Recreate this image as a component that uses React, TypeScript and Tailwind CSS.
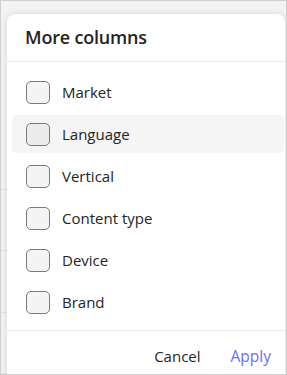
import { useState } from 'react';

const columns = ['Market', 'Language', 'Vertical', 'Content type', 'Device', 'Brand'];

const App = () => {
  const [checked, setChecked] = useState<Record<string, boolean>>({});

  const toggle = (name: string) => {
    setChecked((prev) => ({ ...prev, [name]: !prev[name] }));
  };

  return (
    <div
      className="w-[287px] h-[375px] border border-[#cfcfcf] bg-[#f3f3f3] flex overflow-hidden"
      style={{ fontFamily: '"Open Sans", "Noto Sans", sans-serif' }}
    >
      {/* table behind the panel */}
      <div className="w-[6px] shrink-0 flex flex-col pt-[127px]">
        <div className="h-[62px] border-b border-[#e2e2e2]" />
        <div className="h-[62px] border-b border-[#e2e2e2]" />
        <div className="h-[62px] border-b border-[#e2e2e2]" />
        <div className="h-[62px] border-b border-[#e2e2e2]" />
      </div>

      <div className="mt-[13px] mr-[1px] flex-1 bg-white rounded-t-[8px] shadow-[0_0_6px_rgba(0,0,0,0.12)] flex flex-col">
        <div className="h-[48px] px-[18px] pb-[1px] flex items-center border-b border-[#ebebeb]">
          <h3 className="text-[18px] font-semibold text-[#242424] tracking-[-0.2px]">More columns</h3>
        </div>

        <div className="flex flex-col gap-[4px] pl-[5px] pr-[1px] pt-[11px] pb-[9px] border-b border-[#ebebeb]">
          {columns.map((name) => (
            <button
              key={name}
              onClick={() => toggle(name)}
              className={`h-[38px] rounded-[5px] flex items-center gap-[12px] pl-[14px] text-left ${
                name === 'Language' ? 'bg-[#f5f5f5]' : ''
              }`}
            >
              <span
                className={`w-[24px] h-[23px] rounded-[5px] border-[1.5px] border-[#7a7a7a] flex items-center justify-center ${
                  name === 'Language' ? 'bg-[#ebebeb]' : 'bg-[#f4f4f4]'
                }`}
              >
                {checked[name] && (
                  <svg className="w-3.5 h-3.5" viewBox="0 0 16 16" fill="none" stroke="#242424" strokeWidth={1.6}>
                    <path d="M3 8.5l3.2 3L13 4.5" strokeLinecap="round" strokeLinejoin="round" />
                  </svg>
                )}
              </span>
              <span className="text-[15px] text-[#242424]">{name}</span>
            </button>
          ))}
        </div>

        <div className="flex-1 flex items-center justify-end gap-[30px] pr-[14px] pt-[8px]">
          <button className="text-[15px] text-[#242424]">Cancel</button>
          <button className="text-[15.5px] text-[#6b6ef7]">Apply</button>
        </div>
      </div>
    </div>
  );
};

export default App;
